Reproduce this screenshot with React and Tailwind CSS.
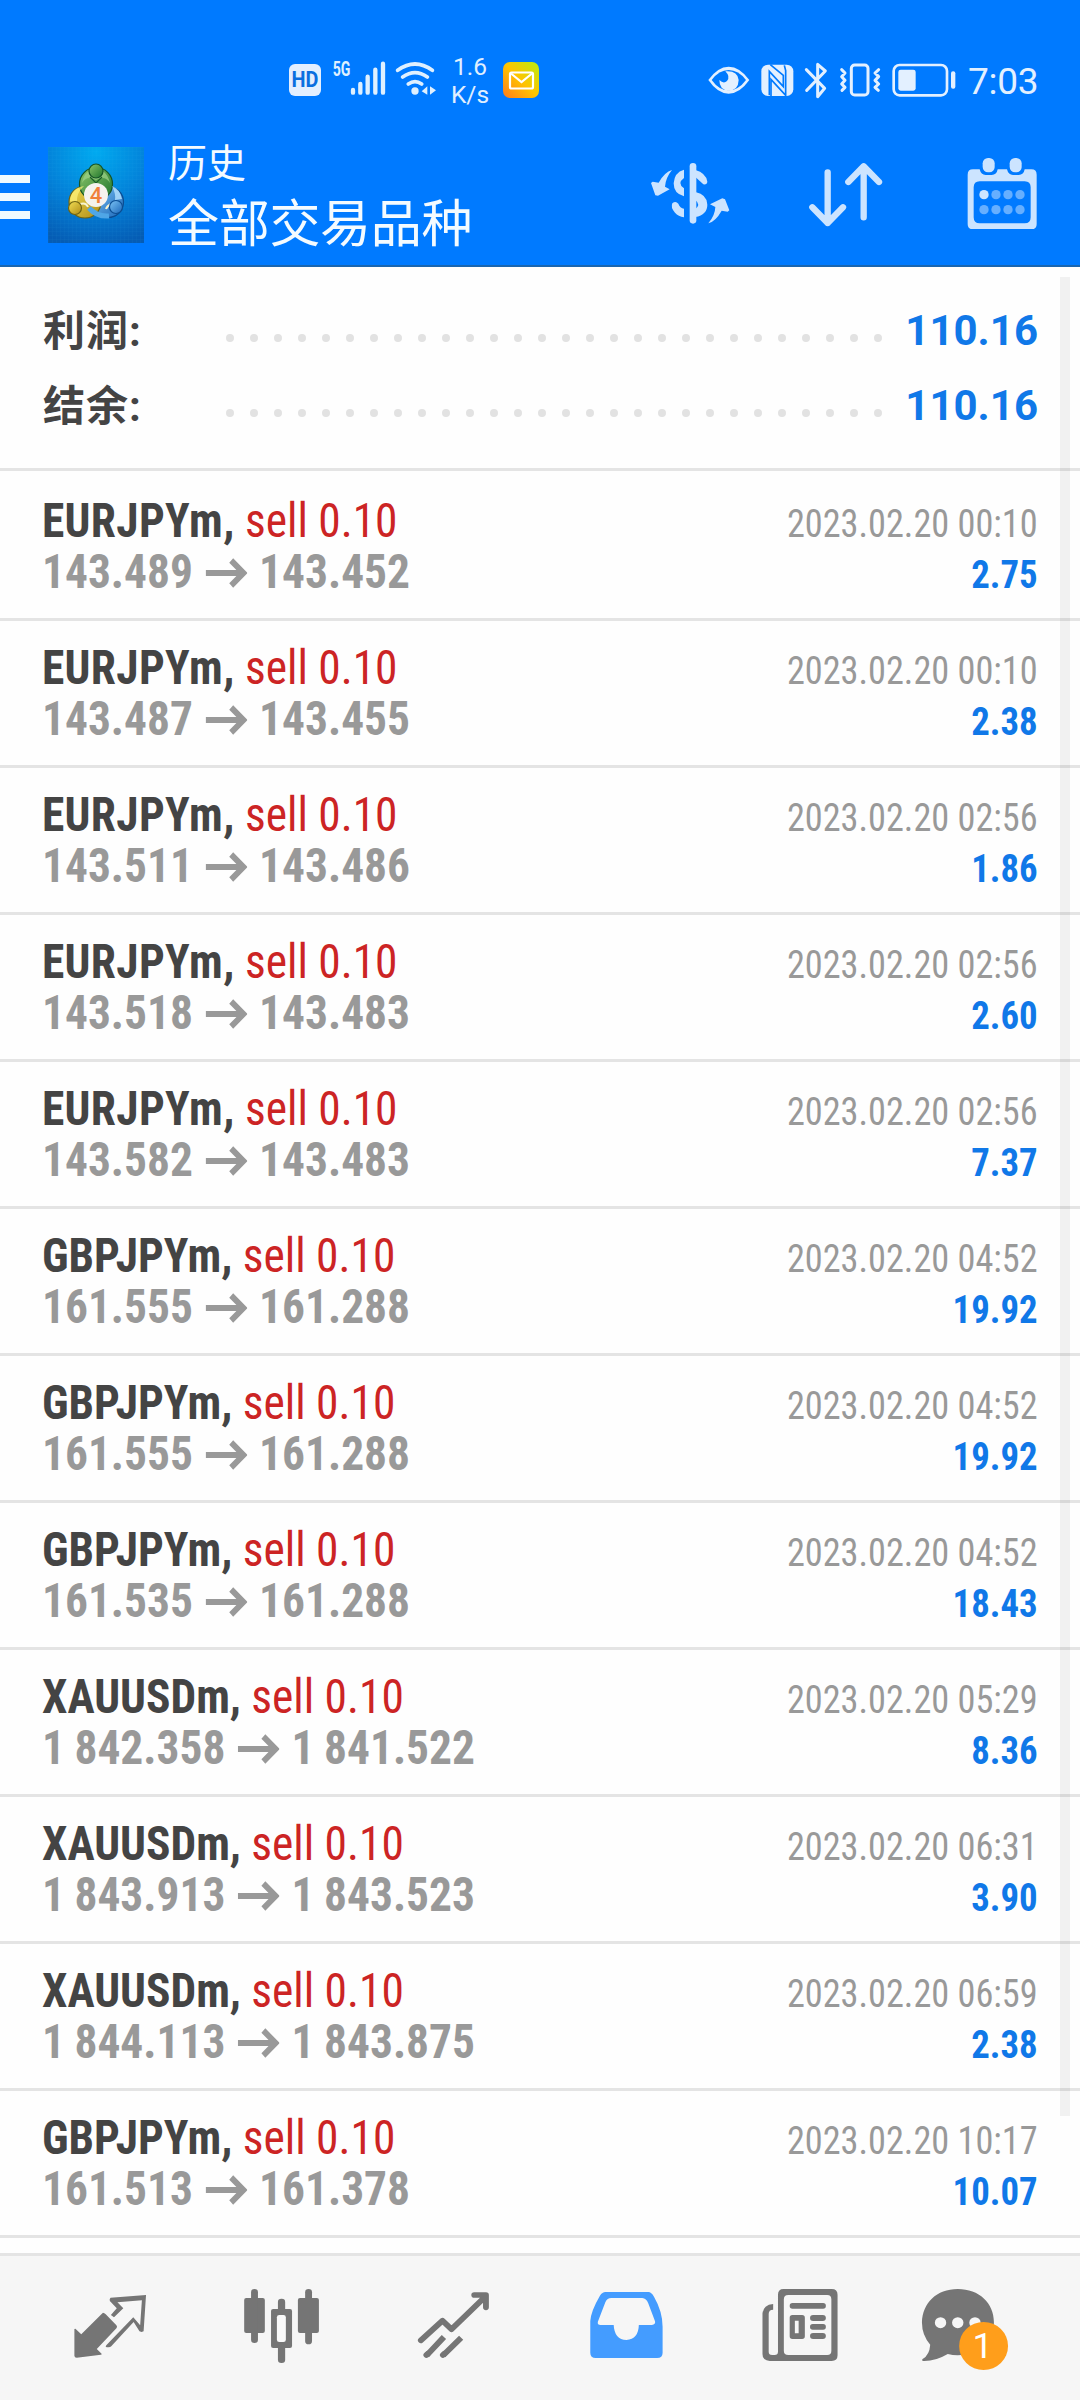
import React from "react";

const trades = [
  ["EURJPYm", "143.489", "143.452", "2023.02.20 00:10", "2.75"],
  ["EURJPYm", "143.487", "143.455", "2023.02.20 00:10", "2.38"],
  ["EURJPYm", "143.511", "143.486", "2023.02.20 02:56", "1.86"],
  ["EURJPYm", "143.518", "143.483", "2023.02.20 02:56", "2.60"],
  ["EURJPYm", "143.582", "143.483", "2023.02.20 02:56", "7.37"],
  ["GBPJPYm", "161.555", "161.288", "2023.02.20 04:52", "19.92"],
  ["GBPJPYm", "161.555", "161.288", "2023.02.20 04:52", "19.92"],
  ["GBPJPYm", "161.535", "161.288", "2023.02.20 04:52", "18.43"],
  ["XAUUSDm", "1 842.358", "1 841.522", "2023.02.20 05:29", "8.36"],
  ["XAUUSDm", "1 843.913", "1 843.523", "2023.02.20 06:31", "3.90"],
  ["XAUUSDm", "1 844.113", "1 843.875", "2023.02.20 06:59", "2.38"],
  ["GBPJPYm", "161.513", "161.378", "2023.02.20 10:17", "10.07"],
];

function StatusLeft() {
  return (
    <div className="flex items-center text-[#e0efff]">
      <div className="flex h-8 w-8 items-center justify-center rounded-md bg-[#e3efff] text-[22px] leading-none font-bold text-[#0a6fe0]">
        <span className="scale-x-90">HD</span>
      </div>
      <svg width="110" height="44" viewBox="182 58 330 132" className="ml-[9px]" fill="#dff0ff">
        <g stroke="#dff0ff" strokeWidth="13" strokeLinecap="round">
          <path d="M251 154v8M273 136v26M295 114v48M318 93v69M341 75v87" />
        </g>
        <g fill="none" stroke="#dff0ff" strokeWidth="11" strokeLinecap="round">
          <path d="M385 95q52-38 104 0M400 115q37-26 74 0M417 136q20-14 40 0" />
        </g>
        <circle cx="437" cy="157" r="11" />
        <path d="M474 143v25l-17-10zM482 143v25l18-13z" />
        <text x="190" y="113" fontSize="60" fontWeight="700" textLength="53" lengthAdjust="spacingAndGlyphs">5G</text>
      </svg>
      <div className="mt-[2px] ml-[8px] flex w-[44px] flex-col items-center text-[24.500px] leading-[28px]">
        <span>1.6</span>
        <span className="whitespace-nowrap">K/s</span>
      </div>
      <svg width="36" height="36" viewBox="0 0 36 36" className="ml-[11px]">
        <defs>
          <linearGradient id="mail" x1="0" y1="1" x2="1" y2="0">
            <stop offset="0" stopColor="#ff7a1a" />
            <stop offset=".5" stopColor="#ffc400" />
            <stop offset="1" stopColor="#b8ee10" />
          </linearGradient>
        </defs>
        <rect width="36" height="36" rx="7" fill="url(#mail)" />
        <rect x="7" y="10.500" width="23" height="16" rx="1.500" fill="none" stroke="#fff" strokeWidth="2.200" />
        <path d="M8 11.500l10.500 8.500 10.500-8.500" fill="none" stroke="#fff" strokeWidth="2.200" />
      </svg>
    </div>
  );
}

function StatusRight() {
  return (
    <div className="flex items-center text-[#e3f0ff]">
      <svg width="250" height="40" viewBox="50 58 750 120" fill="#e3f0ff">
        <path d="M54 118Q82 78 115 78T177 118Q148 159 115 159T54 118z" />
        <path d="M64 118Q86 88 115 88T167 118Q144 149 115 149T64 118z" fill="#007aff" />
        <path d="M105 92q16 16 5 29-10 10-23-3 0 30 28 32 29-1 30-32-3-29-40-26z" />
        <rect x="213" y="72" width="96" height="94" rx="20" />
        <g fill="none" stroke="#007aff" strokeWidth="5">
          <path d="M237 164V92l42 46V104L240 72" />
          <path d="M282 74l4 16v74l-44-48v50" />
        </g>
        <path d="M348 87l55 56-21 25V71l23 20-56 58" fill="none" stroke="#e3f0ff" strokeWidth="9" strokeLinecap="round" strokeLinejoin="round" />
        <rect x="483" y="73" width="50" height="90" rx="10" fill="none" stroke="#e3f0ff" strokeWidth="9" />
        <path d="M454 87l10 10-10 11 10 11-10 11 10 10-9 9M565 87l-11 10 11 11-11 11 11 11-11 10 10 9" fill="none" stroke="#e3f0ff" strokeWidth="9" strokeLinecap="round" strokeLinejoin="round" />
        <rect x="610" y="73" width="160" height="91" rx="18" fill="none" stroke="#e3f0ff" strokeWidth="8" />
        <rect x="624" y="87" width="52" height="63" rx="7" />
        <rect x="782" y="92" width="13" height="52" rx="6" />
      </svg>
      <span className="mt-[3px] ml-[11px] w-[69px] text-[37px] leading-10 tracking-[-0.3px] whitespace-nowrap">7:03</span>
    </div>
  );
}

function AppLogo() {
  return (
    <svg width="96" height="96" viewBox="0 0 96 96">
      <defs>
        <radialGradient id="sky" cx=".5" cy=".05" r="1">
          <stop offset="0" stopColor="#00aaf0" />
          <stop offset=".55" stopColor="#0380d8" />
          <stop offset="1" stopColor="#055cb4" />
        </radialGradient>
        <linearGradient id="green" x1="0" y1="0" x2="1" y2="1">
          <stop offset="0" stopColor="#8cc66a" />
          <stop offset="1" stopColor="#1d742c" />
        </linearGradient>
        <linearGradient id="gold" x1="0" y1="0" x2="1" y2="1">
          <stop offset="0" stopColor="#f2df55" />
          <stop offset="1" stopColor="#af8b15" />
        </linearGradient>
        <linearGradient id="azure" x1="0" y1="0" x2="1" y2="1">
          <stop offset="0" stopColor="#7cc4f5" />
          <stop offset="1" stopColor="#1a66b8" />
        </linearGradient>
        <pattern id="mesh" width="4" height="4" patternUnits="userSpaceOnUse">
          <path d="M0 0H4M0 0V4" stroke="#3cc0f5" strokeWidth=".6" opacity=".15" />
        </pattern>
      </defs>
      <rect width="96" height="96" fill="url(#sky)" />
      <rect width="96" height="96" fill="url(#mesh)" />
      <g strokeWidth="1.200">
        <circle cx="60" cy="55" r="15.500" fill="url(#azure)" stroke="#0b4d92" />
        <circle cx="37" cy="55" r="16" fill="url(#gold)" stroke="#6f6413" />
        <circle cx="48" cy="37" r="16.500" fill="url(#green)" stroke="#155426" />
        <path d="M34 36q2-13 14-14 11 1 14 14-5-8-14-3-9-5-14 3z" fill="#9fd38a" stroke="none" opacity=".7" />
        <path d="M22 54q1-13 14-15-8 7-7 17z" fill="#fff27a" stroke="none" opacity=".7" />
        <path d="M74 52q-2-10-10-13 4 8 3 14z" fill="#b5e2ff" stroke="none" opacity=".8" />
        <path d="M41 61q8 9 20 8" stroke="#4fa6e6" strokeWidth="5" fill="none" />
        <path d="M42 30l6 6 6-6" stroke="#1b5e28" fill="none" />
        <path d="M32 57q6-2 8 3M63 57q-4 2-5 5" stroke="#f8f4d0" strokeWidth="2" fill="none" />
        <circle cx="48" cy="24" r="7" fill="url(#green)" stroke="#155426" />
        <circle cx="27" cy="61" r="6.500" fill="url(#gold)" stroke="#6f6413" />
        <circle cx="68" cy="60" r="6.500" fill="url(#azure)" stroke="#0b4d92" />
      </g>
      <circle cx="48" cy="48" r="12" fill="#f5f3ee" />
      <text x="48" y="55.500" textAnchor="middle" fontSize="22" fontWeight="500" fill="#f0803a">4</text>
    </svg>
  );
}

function HeaderIcons() {
  return (
    <div className="flex items-center">
      <svg width="80" height="72" viewBox="60 50 240 216" fill="#cce4ff">
        <path d="M126 89q-22 6-40 38l-18-3-5 4 13 37 8 1 35-19-14-8q2-27 21-50z" />
        <path d="M235 249q22-6 40-38l18 3 5-4-13-33-8-3-37 18 16 8q-1 26-21 49z" />
        <path d="M162 88v25q-22 16 0 31v24q-31-8-31-39 2-33 31-41zM162 231v-26q-12-2-17-15-8-9-18-1-6 13 8 28 10 11 27 14z" />
        <rect x="179" y="68" width="20" height="182" rx="10" />
        <path d="M196 89q32 9 36 35-1 10-12 8l-24-22zM196 155q36 8 36 38t-36 37v-24q17-13 0-27z" />
      </svg>
      <svg width="76" height="72" viewBox="535 50 228 216" className="ml-[78px]" fill="none" stroke="#cce4ff" strokeWidth="19" strokeLinecap="round" strokeLinejoin="round">
        <path d="M594 96v152M548 201l46 47 46-47M702 231V78M656 125l46-47 46 47" />
      </svg>
      <svg width="72" height="72" viewBox="1009 50 216 216" className="ml-[82px]" fill="#cce4ff">
        <path fillRule="evenodd" d="M1030 87h20q4 17 18 17h18q15 0 18-17h28q4 17 18 17h17q15 0 18-17h20q16 0 16 16v148q0 16-16 16h-175q-16 0-16-16V103q0-16 16-16zM1050 123q-18 0-18 18v90q0 18 18 18h135q18 0 18-18v-90q0-18-18-18z" />
        <rect x="1059" y="53" width="36" height="43" rx="16" />
        <rect x="1140" y="53" width="36" height="43" rx="16" />
        <g fill="#66afff">
          <circle cx="1063" cy="163" r="14" fill="#cce4ff" /><circle cx="1099" cy="163" r="14" /><circle cx="1135" cy="163" r="14" /><circle cx="1171" cy="163" r="14" />
          <circle cx="1063" cy="208" r="14" /><circle cx="1099" cy="208" r="14" /><circle cx="1135" cy="208" r="14" /><circle cx="1171" cy="208" r="14" />
        </g>
      </svg>
    </div>
  );
}

function SummaryRow({ label, value }) {
  return (
    <div className="flex h-[75px] items-center justify-between pr-[42px] pl-[43px]">
      <div className="mt-[2px] w-[183px] text-[42px] leading-[60px] font-bold tracking-[1px] text-[#444]">{label}</div>
      <svg width="656" height="8" viewBox="0 0 656 8" className="mt-[14px]">
        <path d="M4 4H653" stroke="#e2e2e2" strokeWidth="8" strokeLinecap="round" strokeDasharray="0 24" />
      </svg>
      <div className="flex-1 text-right text-[42px] leading-[60px] font-bold text-[#1078e8]">{value}</div>
    </div>
  );
}

function Arrow() {
  return (
    <svg width="44" height="30" viewBox="0 0 44 30" className="mr-[13px] ml-[13px] mt-[3px]" fill="none" stroke="#999" strokeWidth="6">
      <path d="M0 15H40M27 2.500L40 15L27 27.500" />
    </svg>
  );
}

function TradeRow({ trade, first }) {
  const [symbol, open, close, time, profit] = trade;
  return (
    <div className={first ? "flex h-[150px] justify-between border-b-[3px] border-[#e4e4e4] px-[42px] pt-[24px]" : "flex h-[147px] justify-between border-b-[3px] border-[#e4e4e4] px-[42px] pt-[21px]"}>
      <div className="origin-left scale-x-[.946] text-[48px] leading-[51px] whitespace-nowrap [font-stretch:75%]">
        <div className="text-[#cc2424]">
          <span className={symbol === "EURJPYm" ? "font-bold tracking-[0.35px] text-[#444]" : "font-bold text-[#444]"}>{symbol},</span> sell 0.10
        </div>
        <div className="flex items-center font-bold text-[#999] [word-spacing:-1px]">
          {open}
          <Arrow />
          {close}
        </div>
      </div>
      <div className="pt-[4px] text-right text-[39px] leading-[51px] whitespace-nowrap [font-stretch:75%]">
        <div className="origin-right scale-x-[.93] text-[#999]">{time}</div>
        <div className="origin-right scale-x-[.943] font-bold text-[#1078e8]">{profit}</div>
      </div>
    </div>
  );
}

function NavIcon({ shift, children }) {
  return (
    <svg width="172" height="144" viewBox="0 0 172 144" fill="#757575">
      <g transform={`translate(${-shift} -36) scale(.3444 .3333)`}>{children}</g>
    </svg>
  );
}

function TabBar() {
  return (
    <nav className="grid h-[147px] shrink-0 grid-cols-6 border-t-[3px] border-[#e4e4e4] bg-[#f6f6f6] px-6">
      <NavIcon shift={24}>
        <path d="M299 278q4 0 8 5l31 33q4 5 0 9l-57 62 14 14q1 3-2 3l-70 9q-7 0-7-6v-80l3-1 17 17 57-59z" />
        <path fillRule="evenodd" d="M424 225l-7 109-6 2-6-2-17-28-65 73q-4 5-16 2 0-4 3-7l77-82 20 24 5-75-71 6 17 18-27 27-9-7 17-20-20-22q-2-6 2-10z" />
      </NavIcon>
      <NavIcon shift={196}>
        <rect x="709" y="234" width="60" height="105" rx="6" />
        <rect x="865" y="234" width="61" height="105" rx="6" />
        <rect x="729" y="207" width="20" height="162" rx="10" />
        <rect x="886" y="207" width="20" height="166" rx="10" />
        <rect x="807" y="236" width="21" height="193" rx="10" />
        <rect x="787" y="267" width="61" height="117" rx="6" />
        <rect x="804" y="285" width="26" height="81" rx="7" fill="#f9f9f9" />
      </NavIcon>
      <NavIcon shift={368}>
        <g fill="none" stroke="#757575" strokeWidth="17" strokeLinejoin="round">
          <path strokeLinecap="round" d="M1222 361l63-59 26 26 97-97M1377 225h34v37" />
          <path d="M1289 351l-50 55M1339 353l-52 53" />
          <path strokeLinecap="round" d="M1238 405l4-4M1286 405l4-4" />
        </g>
      </NavIcon>
      <NavIcon shift={0}>
        <path fill="#449cff" fillRule="evenodd" d="M190 216h125q8 0 16 14 25 45 25 90v78q0 16-16 16H162q-16 0-16-16v-95q2-30 28-76 7-11 16-11zM207 234q-12 0-17 12l-22 59q-2 10 8 10h38q2 44 37 45 35-3 36-45h38q11-1 9-11l-20-55q-5-14-17-15z" />
      </NavIcon>
      <NavIcon shift={172}>
        <path fillRule="evenodd" d="M707 207h140q17 0 17 17v182q0 17-17 17H667q-21-2-21-21V280q3-26 31-28v17q-13 0-13 13v113q0 10 10 10h7q10 0 10-10V224q0-17 16-17zM721 225q-13 0-13 13v154q0 13 13 13h113q12 0 12-13V238q0-13-12-13z" />
        <rect x="725" y="249" width="105" height="17" rx="8" />
        <path fillRule="evenodd" d="M733 285h28q8 0 8 8v56q0 8-8 8h-28q-8 0-8-8v-56q0-8 8-8zM740 302v38h11v-38z" />
        <rect x="784" y="285" width="46" height="18" rx="9" />
        <rect x="784" y="312" width="46" height="17" rx="8" />
        <rect x="784" y="339" width="46" height="18" rx="9" />
      </NavIcon>
      <NavIcon shift={344}>
        <path d="M1213 207c62 0 105 42 105 100 0 57-43 99-105 99q-15 0-29-4-36 22-71 21-6-1-2-6 20-12 22-43-24-28-24-67c2-58 42-100 104-100z" />
        <g fill="#f6f6f6">
          <circle cx="1163" cy="308" r="16.500" />
          <circle cx="1213" cy="308" r="16.500" />
          <circle cx="1263" cy="308" r="16.500" />
        </g>
        <ellipse cx="1288" cy="378" rx="71" ry="72" fill="#ff9e1b" />
        <text x="1285" y="414" textAnchor="middle" fontSize="105" fill="#fff">1</text>
      </NavIcon>
    </nav>
  );
}

export default function App() {
  return (
    <div className="relative flex h-[2400px] w-[1080px] flex-col overflow-hidden bg-[#fefefe] font-['Roboto','Noto_Sans_CJK_SC',sans-serif]">
      <header className="h-[267px] shrink-0 border-b-2 border-[#1a66b0] bg-[#007aff]">
        <div className="flex h-[128px] items-center justify-between pt-[32px] pr-[43px] pl-[289px]">
          <StatusLeft />
          <StatusRight />
        </div>
        <div className="flex h-[134px] items-center">
          <div className="mt-[4px] flex w-[30px] flex-col gap-[10px]">
            <i className="h-2 bg-[#effaff]" />
            <i className="h-2 bg-[#effaff]" />
            <i className="h-2 bg-[#effaff]" />
          </div>
          <div className="ml-[18px]"><AppLogo /></div>
          <div className="ml-[24px] flex-1 text-[#f4fbff]">
            <div className="text-[39px] leading-[58px]">历史</div>
            <div className="mt-[2px] text-[51px] leading-[60px] tracking-[-0.3px]">全部交易品种</div>
          </div>
          <div className="mr-[42px] mb-[4px]"><HeaderIcons /></div>
        </div>
      </header>
      <section className="h-[204px] shrink-0 border-b-[3px] border-[#e4e4e4] pt-[26px]">
        <SummaryRow label="利润:" value="110.16" />
        <SummaryRow label="结余:" value="110.16" />
      </section>
      <main className="flex-1">
        {trades.map((t, i) => (
          <TradeRow key={i} trade={t} first={i === 0} />
        ))}
      </main>
      <TabBar />
      <div className="absolute top-[277px] left-[1060px] h-[1839px] w-[10px] bg-black/5" />
    </div>
  );
}
